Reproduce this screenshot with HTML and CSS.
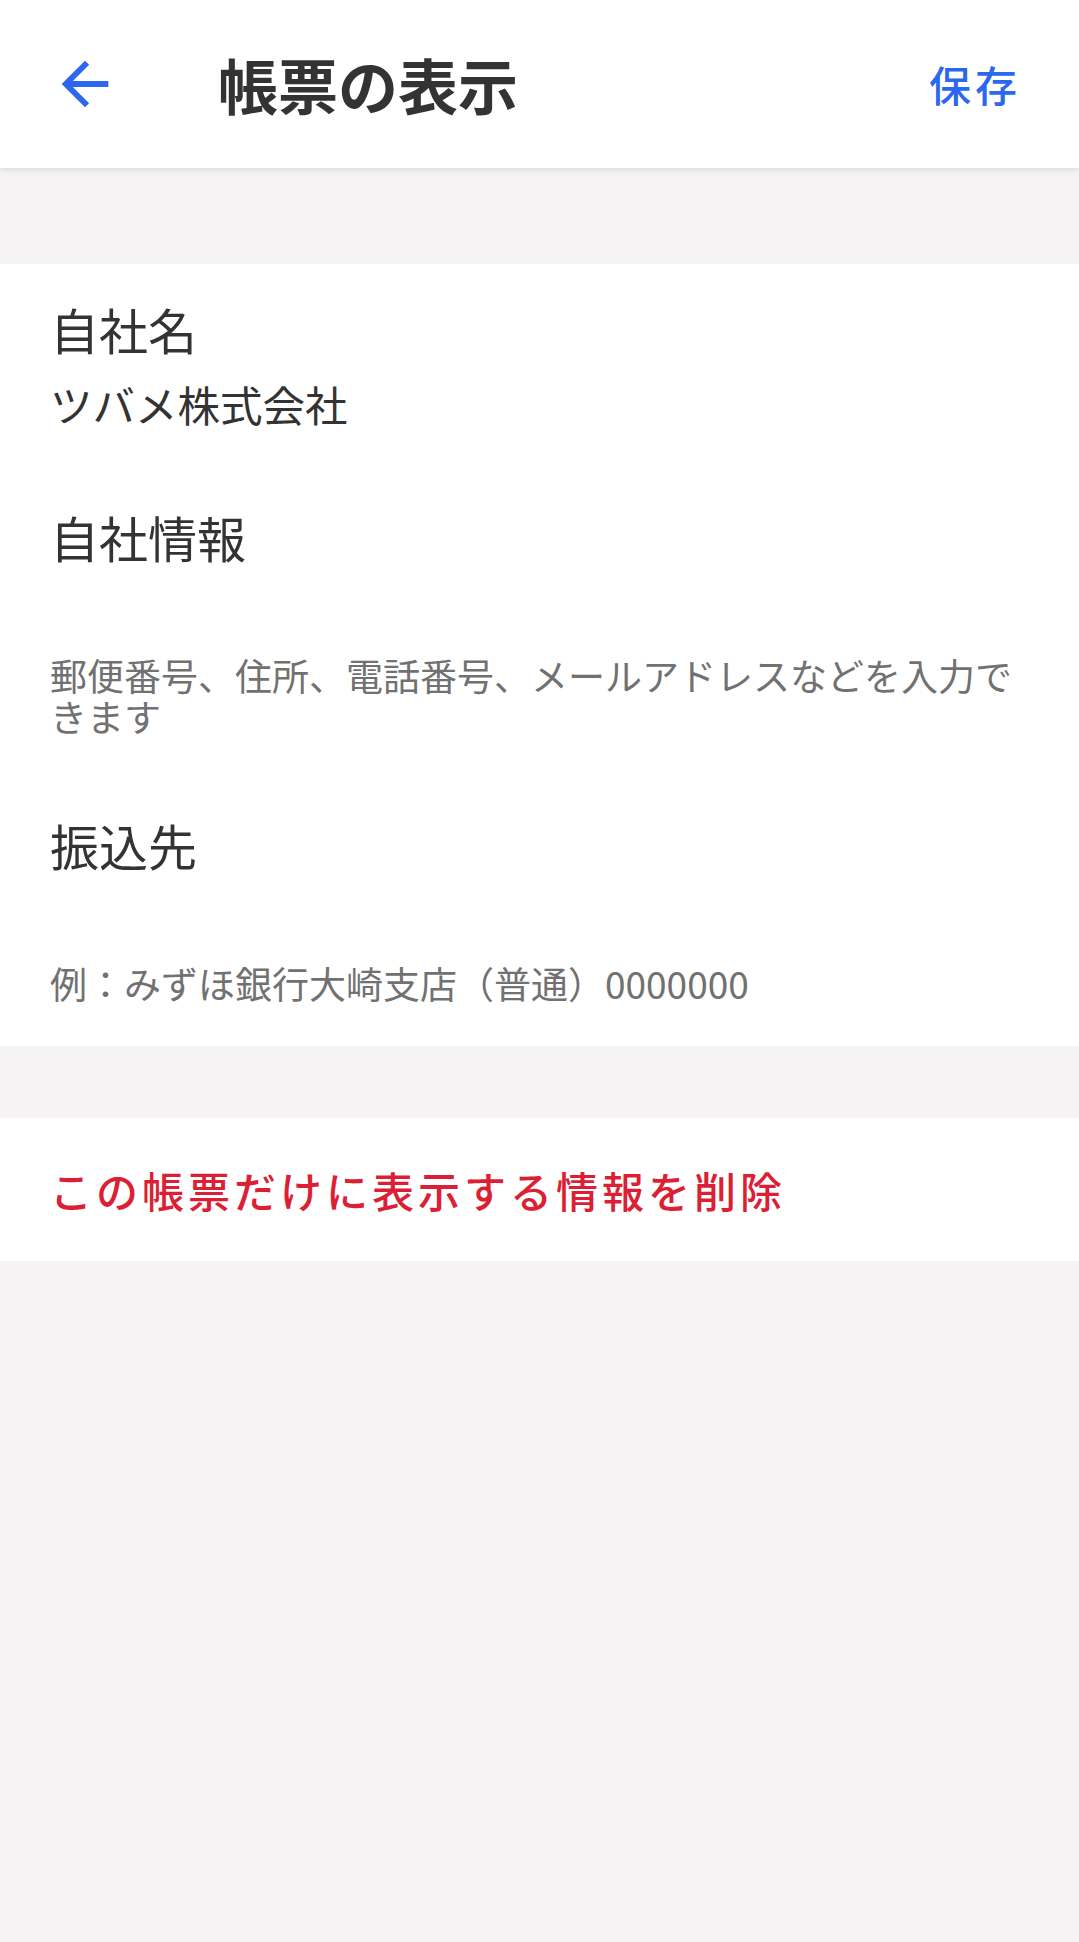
FILE: index.html
```html
<!DOCTYPE html>
<html lang="ja">
<head>
    <meta charset="UTF-8">
    <meta name="viewport" content="width=device-width, initial-scale=1.0">
    <title>帳票の表示</title>
    <link rel="stylesheet" href="styles.css">
</head>
<body>
    <header class="app-bar">
        <button class="back-button" type="button" aria-label="戻る">
            <svg class="back-icon" viewBox="0 0 24 24" width="70" height="70">
                <path d="M20 11H7.83l5.59-5.59L12 4l-8 8 8 8 1.41-1.41L7.83 13H20v-2z"></path>
            </svg>
        </button>
        <h1 class="app-title">帳票の表示</h1>
        <button class="save-button" type="button">保存</button>
    </header>

    <section class="card form-card">
        <div class="field">
            <div class="field-label">自社名</div>
            <div class="field-value">ツバメ株式会社</div>
        </div>

        <div class="field">
            <div class="field-label">自社情報</div>
            <div class="field-hint">郵便番号、住所、電話番号、メールアドレスなどを入力できます</div>
        </div>

        <div class="field">
            <div class="field-label">振込先</div>
            <div class="field-hint">例：みずほ銀行大崎支店（普通）0000000</div>
        </div>
    </section>

    <section class="card action-card">
        <button class="delete-button" type="button">この帳票だけに表示する情報を削除</button>
    </section>
</body>
</html>
```

FILE: styles.css
```css
* {
    margin: 0;
    padding: 0;
    box-sizing: border-box;
}

body {
    font-family: "Noto Sans CJK JP", "Noto Sans", sans-serif;
    background: #f5f3f4;
    color: #333333;
    min-height: 100vh;
}

button {
    font-family: inherit;
    background: none;
    border: none;
    cursor: pointer;
}

/* Top bar */
.app-bar {
    height: 168px;
    background: #ffffff;
    display: flex;
    align-items: center;
    padding: 0 58px 0 50px;
    box-shadow: 0 2px 5px rgba(0, 0, 0, 0.1);
}

.back-button {
    display: flex;
    width: 70px;
    height: 70px;
}

.back-icon {
    fill: #2b67ef;
}

.app-title {
    margin-left: 98px;
    font-size: 60px;
    font-weight: 700;
    line-height: 70px;
    color: #333333;
    flex: 1;
}

.save-button {
    font-size: 42px;
    font-weight: 500;
    letter-spacing: 4px;
    line-height: 60px;
    color: #2b67ef;
}

/* White blocks */
.card {
    background: #ffffff;
}

.form-card {
    margin-top: 96px;
    padding: 36px 60px 42px 50px;
    display: flex;
    flex-direction: column;
    gap: 79px;
}

.field-label {
    font-size: 49px;
    line-height: 57px;
    color: #333333;
}

.field-value {
    margin-top: 22px;
    font-size: 42.5px;
    line-height: 50px;
    color: #333333;
}

.field-hint {
    margin-top: 90px;
    font-size: 37px;
    line-height: 41px;
    color: #717171;
}

/* Delete action */
.action-card {
    margin-top: 72px;
    height: 143px;
    display: flex;
    align-items: center;
    padding-left: 50px;
}

.delete-button {
    font-size: 42px;
    font-weight: 500;
    letter-spacing: 4px;
    line-height: 60px;
    color: #dc1f34;
}
```
